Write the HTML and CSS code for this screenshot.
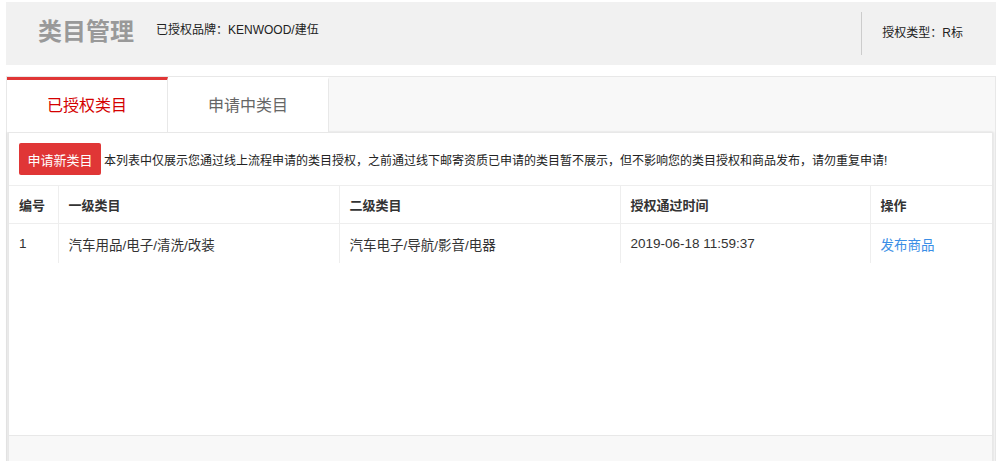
FILE: index.html
```html
<!DOCTYPE html>
<html lang="zh-CN">
<head>
  <meta charset="UTF-8" />
  <title>类目管理</title>
  <link rel="stylesheet" href="styles.css">
</head>
<body>
  <div class="head">
    <h1 class="head-title">类目管理</h1>
    <span class="head-brand">已授权品牌：KENWOOD/建伍</span>
    <div class="head-type">授权类型：R标</div>
  </div>

  <div class="panel">
    <div class="tabs">
      <a class="tab active" href="#">已授权类目</a>
      <a class="tab" href="#">申请中类目</a>
    </div>
    <div class="panel-body">
      <div class="notice">
        <button class="apply-btn">申请新类目</button>
        <span>本列表中仅展示您通过线上流程申请的类目授权，之前通过线下邮寄资质已申请的类目暂不展示，但不影响您的类目授权和商品发布，请勿重复申请!</span>
      </div>
      <table class="cat-table">
        <colgroup>
          <col class="c-no"><col class="c-first"><col class="c-second"><col class="c-time"><col>
        </colgroup>
        <thead>
          <tr><th>编号</th><th>一级类目</th><th>二级类目</th><th>授权通过时间</th><th>操作</th></tr>
        </thead>
        <tbody>
          <tr>
            <td>1</td>
            <td>汽车用品/电子/清洗/改装</td>
            <td>汽车电子/导航/影音/电器</td>
            <td>2019-06-18 11:59:37</td>
            <td><a class="op-link" href="#">发布商品</a></td>
          </tr>
        </tbody>
      </table>
      <div class="panel-foot"></div>
    </div>
  </div>
</body>
</html>
```

FILE: styles.css
```css
html, body {
  margin: 0;
  padding: 0;
  background: #fff;
  font-family: "Liberation Sans", "Noto Sans CJK SC", sans-serif;
  color: #333;
  overflow: hidden;
}
.head {
  margin: 2px 6px 0;
  height: 63px;
  background: #f1f1f1;
  display: flex;
  align-items: flex-start;
}
.head-title {
  margin: 14px 0 0 32px;
  font-size: 24px;
  line-height: 32px;
  font-weight: bold;
  color: #999;
}
.head-brand {
  margin: 18px 0 0 22px;
  font-size: 12px;
  line-height: 20px;
  color: #222;
}
.head-type {
  margin: 10px 33px 0 auto;
  height: 43px;
  border-left: 1px solid #ccc;
  padding-left: 20px;
  font-size: 12px;
  line-height: 43px;
  color: #222;
}
.panel {
  margin: 11px 6px 0;
  border: 1px solid #e8e8e8;
  border-bottom: none;
  background: #f8f8f8;
}
.tabs {
  display: flex;
  height: 55px;
}
.tab {
  width: 160px;
  border-right: 1px solid #e8e8e8;
  border-top: 3px solid transparent;
  background: #fff;
  text-align: center;
  line-height: 52px;
  font-size: 16px;
  color: #666;
  text-decoration: none;
}
.tab.active {
  border-top-color: #e03636;
  color: #d40000;
}
.panel-body {
  margin: 0 2px 0 1px;
  height: 340px;
  background: #fff;
  border: 1px solid #e8e8e8;
  border-bottom: none;
  box-shadow: -1px 0 2px rgba(0,0,0,.08), 1px 0 2px rgba(0,0,0,.08);
  display: flex;
  flex-direction: column;
}
.notice {
  display: flex;
  align-items: center;
  gap: 3px;
  padding: 10px 10px;
  border-bottom: 1px solid #eee;
  font-size: 12px;
  color: #222;
}
.apply-btn {
  height: 32px;
  width: 82px;
  padding: 0;
  border: none;
  border-radius: 2px;
  background: #e03636;
  color: #fff;
  font-family: inherit;
  font-size: 13px;
  cursor: pointer;
}
.cat-table {
  width: 100%;
  border-collapse: collapse;
  table-layout: fixed;
  font-size: 13px;
}
.c-no { width: 49px; }
.c-first { width: 281px; }
.c-second { width: 281px; }
.c-time { width: 250px; }
.cat-table th, .cat-table td {
  text-align: left;
  padding: 0 10px;
  border-left: 1px solid #eee;
  border-bottom: 1px solid #eee;
  height: 37px;
  color: #333;
}
.cat-table th:first-child, .cat-table td:first-child {
  border-left: none;
}
.cat-table tbody td {
  border-bottom: none;
  height: 39px;
  font-size: 13.5px;
}
.cat-table th {
  font-weight: bold;
}
.op-link {
  color: #3a8ee6;
  text-decoration: none;
}
.panel-foot {
  margin-top: auto;
  height: 37px;
  border-top: 1px solid #e8e8e8;
  background: #f8f8f8;
}
```
